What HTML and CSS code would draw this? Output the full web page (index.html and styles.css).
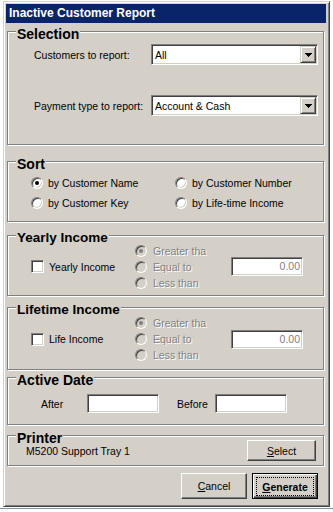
FILE: index.html
```html
<!DOCTYPE html>
<html>
<head>
<meta charset="utf-8">
<title>Inactive Customer Report</title>
<link rel="stylesheet" href="styles.css">
</head>
<body>
<div class="window">
  <div class="titlebar">Inactive Customer Report</div>

  <section class="group g-selection">
    <h2 class="gtitle">Selection</h2>
    <div class="sel-grid">
      <span class="lbl">Customers to report:</span>
      <div class="combo">
        <span class="combo-text">All</span>
        <span class="combo-btn"><svg width="7" height="4" viewBox="0 0 7 4"><rect x="0" y="0" width="7" height="1"/><rect x="1" y="1" width="5" height="1"/><rect x="2" y="2" width="3" height="1"/><rect x="3" y="3" width="1" height="1"/></svg></span>
      </div>
      <span class="lbl">Payment type to report:</span>
      <div class="combo">
        <span class="combo-text">Account &amp; Cash</span>
        <span class="combo-btn"><svg width="7" height="4" viewBox="0 0 7 4"><rect x="0" y="0" width="7" height="1"/><rect x="1" y="1" width="5" height="1"/><rect x="2" y="2" width="3" height="1"/><rect x="3" y="3" width="1" height="1"/></svg></span>
      </div>
    </div>
  </section>

  <section class="group g-sort">
    <h2 class="gtitle">Sort</h2>
    <div class="sort-grid">
      <div class="opt"><span class="radio checked"></span><span>by Customer Name</span></div>
      <div class="opt"><span class="radio"></span><span>by Customer Number</span></div>
      <div class="opt"><span class="radio"></span><span>by Customer Key</span></div>
      <div class="opt"><span class="radio"></span><span>by Life-time Income</span></div>
    </div>
  </section>

  <section class="group g-yearly">
    <h2 class="gtitle">Yearly Income</h2>
    <div class="inc-row">
      <div class="chk-cell"><span class="checkbox"></span><span>Yearly Income</span></div>
      <div class="radio-col">
        <div class="rrow"><span class="radio disabled checked"></span><span class="dis">Greater tha</span></div>
        <div class="rrow"><span class="radio disabled"></span><span class="dis">Equal to</span></div>
        <div class="rrow"><span class="radio disabled"></span><span class="dis">Less than</span></div>
      </div>
      <div class="tb num">0.00</div>
    </div>
  </section>

  <section class="group g-life">
    <h2 class="gtitle">Lifetime Income</h2>
    <div class="inc-row life-row">
      <div class="chk-cell"><span class="checkbox"></span><span>Life Income</span></div>
      <div class="radio-col">
        <div class="rrow"><span class="radio disabled checked"></span><span class="dis">Greater tha</span></div>
        <div class="rrow"><span class="radio disabled"></span><span class="dis">Equal to</span></div>
        <div class="rrow"><span class="radio disabled"></span><span class="dis">Less than</span></div>
      </div>
      <div class="tb num">0.00</div>
    </div>
  </section>

  <section class="group g-date">
    <h2 class="gtitle">Active Date</h2>
    <div class="date-row">
      <span class="date-lbl after">After</span>
      <div class="tb"></div>
      <span class="date-lbl before">Before</span>
      <div class="tb"></div>
    </div>
  </section>

  <section class="group g-printer">
    <h2 class="gtitle">Printer</h2>
    <div class="printer-row">
      <span>M5200 Support Tray 1</span>
      <button class="btn btn-select"><u>S</u>elect</button>
    </div>
  </section>

  <div class="actions">
    <button class="btn btn-cancel"><u>C</u>ancel</button>
    <button class="btn btn-default"><span class="focus"><u>G</u>enerate</span></button>
  </div>
</div>
<div class="backline"></div>
</body>
</html>
```

FILE: styles.css
```css
* { box-sizing: border-box; }

html, body { margin: 0; padding: 0; }

body {
  width: 333px;
  height: 512px;
  overflow: hidden;
  background: #ffffff;
  font-family: "Liberation Sans", Arial, sans-serif;
  font-size: 10.5px;
  color: #000;
}

.window {
  margin: 1px 0 0 3px;
  width: 327px;
  height: 506px;
  background: #d4d0c8;
  border: 1px solid;
  border-color: #d4d0c8 #404040 #404040 #d4d0c8;
  box-shadow: inset 1px 1px 0 #fff, inset -1px -1px 0 #808080;
  padding: 2px 3px 0 2px;
}

.titlebar {
  height: 19px;
  line-height: 19px;
  background: #0a246a;
  color: #fff;
  font-weight: bold;
  font-size: 12px;
  padding-left: 3px;
  white-space: nowrap;
}

/* group boxes */
.group {
  margin-left: 1px;
  width: 317px;
  border: 1px solid #808080;
  box-shadow: 1px 1px 0 #fff, inset 1px 1px 0 #fff;
}

.gtitle {
  margin: -5px 0 0 8px;
  padding: 0 1px;
  width: fit-content;
  background: #d4d0c8;
  font-size: 14px;
  font-weight: bold;
  line-height: 14px;
  white-space: nowrap;
}

.g-yearly .gtitle, .g-life .gtitle { font-size: 13.5px; }

.g-selection { margin-top: 8px; height: 114px; }
.g-sort { margin-top: 16px; height: 61px; }
.g-yearly { margin-top: 13px; height: 61px; }
.g-life { margin-top: 11px; height: 63px; }
.g-date { margin-top: 7px; height: 48px; }
.g-printer { margin-top: 10px; height: 31px; }

/* selection */
.sel-grid {
  display: grid;
  grid-template-columns: 117px 167px;
  grid-auto-rows: 21px;
  row-gap: 30px;
  align-items: center;
  padding: 3px 0 0 26px;
}

.lbl { white-space: nowrap; }

.combo {
  height: 21px;
  width: 167px;
  display: flex;
  align-items: center;
  background: #fff;
  border: 1px solid;
  border-color: #808080 #fff #fff #808080;
  box-shadow: inset 1px 1px 0 #404040, inset -1px -1px 0 #d4d0c8;
  padding: 1px;
}

.combo-text {
  flex: 1;
  padding-left: 2px;
  white-space: nowrap;
}

.combo-btn {
  width: 16px;
  height: 17px;
  display: flex;
  align-items: center;
  justify-content: center;
  background: #d4d0c8;
  border: 1px solid;
  border-color: #d4d0c8 #404040 #404040 #d4d0c8;
  box-shadow: inset 1px 1px 0 #fff, inset -1px -1px 0 #808080;
}

.combo-btn svg { display: block; fill: #000; margin-top: 1px; }

/* sort */
.sort-grid {
  display: grid;
  grid-template-columns: 144px auto;
  grid-auto-rows: 20px;
  align-items: center;
  padding: 2px 0 0 23px;
}

.opt, .rrow, .chk-cell {
  display: flex;
  align-items: center;
  white-space: nowrap;
}

.opt { gap: 5px; }

.radio {
  position: relative;
  flex: none;
  width: 12px;
  height: 12px;
  border-radius: 50%;
  background: #fff;
  border: 1px solid;
  border-color: #808080 #fff #fff #808080;
  box-shadow: inset 1px 1px 0 #404040, inset -1px -1px 0 #d4d0c8;
}

.radio.checked::after {
  content: "";
  position: absolute;
  left: 3px;
  top: 3px;
  width: 4px;
  height: 4px;
  border-radius: 50%;
  background: #000;
}

.radio.disabled { background: #d4d0c8; }
.radio.disabled.checked::after { background: #808080; }

.dis {
  color: #808080;
  text-shadow: 1px 1px 0 #fff;
}

/* income groups */
.inc-row {
  display: flex;
  align-items: center;
  margin-top: -3px;
  height: 49px;
  padding-left: 23px;
}

.life-row { margin-top: -2px; height: 48px; }

.chk-cell { width: 104px; gap: 5px; }

.checkbox {
  flex: none;
  width: 13px;
  height: 13px;
  background: #fff;
  border: 1px solid;
  border-color: #808080 #fff #fff #808080;
  box-shadow: inset 1px 1px 0 #404040, inset -1px -1px 0 #d4d0c8;
}

.radio-col {
  width: 96px;
  display: flex;
  flex-direction: column;
}

.rrow { height: 16px; gap: 6px; }

.tb {
  flex: none;
  width: 72px;
  height: 19px;
  background: #fff;
  border: 1px solid;
  border-color: #808080 #fff #fff #808080;
  box-shadow: inset 1px 1px 0 #404040, inset -1px -1px 0 #d4d0c8;
  line-height: 17px;
}

.tb.num {
  text-align: right;
  padding-right: 2px;
  color: #808080;
}

/* date */
.date-row {
  display: flex;
  align-items: center;
  padding: 7px 0 0 33px;
}

.date-lbl { white-space: nowrap; }
.date-lbl.after { width: 46px; }
.date-lbl.before { width: 38px; margin-left: 18px; }

/* printer */
.printer-row {
  display: flex;
  align-items: center;
  justify-content: space-between;
  margin-top: -5px;
  height: 21px;
  padding: 0 7px 0 18px;
  white-space: nowrap;
}

/* buttons */
.btn {
  font-family: "Liberation Sans", Arial, sans-serif;
  font-size: 10.5px;
  color: #000;
  background: #d4d0c8;
  border: 1px solid;
  border-color: #fff #404040 #404040 #fff;
  box-shadow: inset -1px -1px 0 #808080;
  padding: 0;
  margin: 0;
  display: flex;
  align-items: center;
  justify-content: center;
}

.btn-select { width: 69px; height: 21px; }

.actions {
  display: flex;
  justify-content: flex-end;
  gap: 5px;
  margin-top: 7px;
  padding-right: 8px;
}

.btn-cancel { width: 66px; height: 26px; }

.btn-default {
  width: 66px;
  height: 26px;
  border: 1px solid #000;
  box-shadow: inset 1px 1px 0 #fff, inset -1px -1px 0 #404040, inset -2px -2px 0 #808080;
  padding: 3px 3px 2px 3px;
  font-weight: bold;
}

.focus {
  flex: 1;
  align-self: stretch;
  display: flex;
  align-items: center;
  justify-content: center;
  border: 1px dotted #000;
}

.backline {
  margin-top: 1px;
  height: 1px;
  background: #7d93a6;
}
```
